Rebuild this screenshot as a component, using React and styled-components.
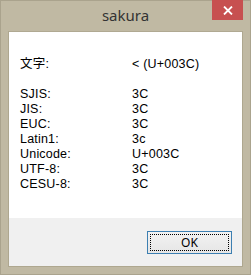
import styled, { createGlobalStyle } from "styled-components";

const Global = createGlobalStyle`
    html, body {
        margin: 0;
        padding: 0;
        background: #c0b9a3;
    }
`

const rows = [
    ["SJIS:", "3C"],
    ["JIS:", "3C"],
    ["EUC:", "3C"],
    ["Latin1:", "3c"],
    ["Unicode:", "U+003C"],
    ["UTF-8:", "3C"],
    ["CESU-8:", "3C"],
];

export default function App() {
    return (
        <>
            <Global />
            <Window>
                <TitleBar>
                    <span />
                    <Title>sakura</Title>
                    <CloseButton>
                        <svg width="10" height="9" viewBox="0 0 10 9">
                            <path d="M1 0.5 L9 8.5 M9 0.5 L1 8.5" stroke="#fff" strokeWidth="1.8" />
                        </svg>
                    </CloseButton>
                </TitleBar>
                <Client>
                    <Content>
                        <Row>
                            <Label>文字:</Label>
                            <Value>&lt; (U+003C)</Value>
                        </Row>
                        <Spacer />
                        {rows.map(([k, v]) => (
                            <Row key={k}>
                                <Label>{k}</Label>
                                <Value>{v}</Value>
                            </Row>
                        ))}
                    </Content>
                    <ButtonBar>
                        <OkButton>
                            <Focus>OK</Focus>
                        </OkButton>
                    </ButtonBar>
                </Client>
            </Window>
        </>
    );
}

const Window = styled.div`
    width: 251px;
    height: 275px;
    box-sizing: border-box;
    border: 1px solid #aaa38d;
    background: #c0b9a3;
    display: flex;
    flex-direction: column;
    padding: 0 7px 7px 7px;
`

const TitleBar = styled.div`
    height: 30px;
    display: grid;
    grid-template-columns: 1fr auto 1fr;
    align-items: start;
`

const Title = styled.div`
    font-family: "Noto Sans", "Open Sans", sans-serif;
    font-size: 15px;
    color: #333;
    line-height: 30px;
    margin-top: -1px;
`

const CloseButton = styled.div`
    justify-self: end;
    width: 31px;
    height: 20px;
    margin-top: -1px;
    background: #c75050;
    display: flex;
    align-items: center;
    justify-content: center;
`

const Client = styled.div`
    flex: 1;
    display: flex;
    flex-direction: column;
    border: 1px solid #aea78f;
    border-top-color: #b0a992;
`

const Content = styled.div`
    flex: 1;
    background: #fff;
    padding: 25px 0 0 11px;
    font-family: "Liberation Sans", "Noto Sans CJK JP", sans-serif;
    font-size: 12.5px;
    letter-spacing: 0.2px;
    color: #000;
`

const Row = styled.div`
    display: flex;
    height: 15px;
    line-height: 15px;
`

const Spacer = styled.div`
    height: 15px;
`

const Label = styled.div`
    width: 112px;
`

const Value = styled.div``

const ButtonBar = styled.div`
    height: 48px;
    background: #f0f0f0;
    display: flex;
    justify-content: flex-end;
    padding: 13px 10px 0 0;
    box-sizing: border-box;
`

const OkButton = styled.div`
    width: 85px;
    height: 23px;
    box-sizing: border-box;
    border: 1px solid #3c7fb1;
    background: linear-gradient(#f2f2f2, #e6e6e6);
    padding: 2px;
`

const Focus = styled.div`
    height: 100%;
    box-sizing: border-box;
    border: 1px dotted #000;
    display: flex;
    align-items: center;
    justify-content: center;
    font-family: "Noto Sans", "Open Sans", sans-serif;
    font-size: 12px;
    color: #000;
`
